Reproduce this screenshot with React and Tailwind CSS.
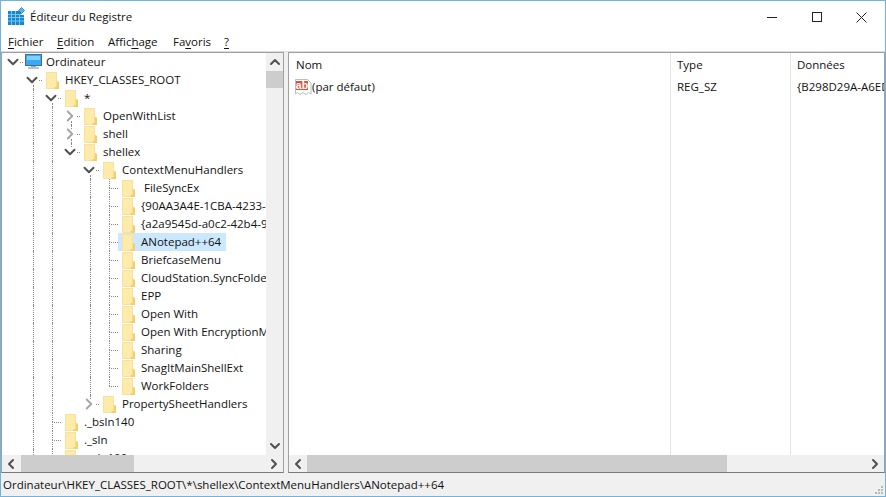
import { ChevronDown, ChevronRight, ChevronUp, ChevronLeft } from 'lucide-react'

const rows = [
  { d: 0, label: 'Ordinateur', icon: 'pc', open: true },
  { d: 1, label: 'HKEY_CLASSES_ROOT', open: true, down: true },
  { d: 2, label: '*', open: true, guides: [1], down: true },
  { d: 3, label: 'OpenWithList', closed: true, guides: [1, 2], down: true },
  { d: 3, label: 'shell', closed: true, guides: [1, 2], up: true, down: true },
  { d: 3, label: 'shellex', open: true, guides: [1, 2], up: true },
  { d: 4, label: 'ContextMenuHandlers', open: true, guides: [1, 2], down: true },
  { d: 5, label: ' FileSyncEx', guides: [1, 2, 4], up: true, down: true },
  { d: 5, label: '{90AA3A4E-1CBA-4233-B8BB-535773D48449}', guides: [1, 2, 4], up: true, down: true },
  { d: 5, label: '{a2a9545d-a0c2-42b4-9708-A0B2BADD77C8}', guides: [1, 2, 4], up: true, down: true },
  { d: 5, label: 'ANotepad++64', guides: [1, 2, 4], up: true, down: true, selected: true },
  { d: 5, label: 'BriefcaseMenu', guides: [1, 2, 4], up: true, down: true },
  { d: 5, label: 'CloudStation.SyncFolder', guides: [1, 2, 4], up: true, down: true },
  { d: 5, label: 'EPP', guides: [1, 2, 4], up: true, down: true },
  { d: 5, label: 'Open With', guides: [1, 2, 4], up: true, down: true },
  { d: 5, label: 'Open With EncryptionMenu', guides: [1, 2, 4], up: true, down: true },
  { d: 5, label: 'Sharing', guides: [1, 2, 4], up: true, down: true },
  { d: 5, label: 'SnagItMainShellExt', guides: [1, 2, 4], up: true, down: true },
  { d: 5, label: 'WorkFolders', guides: [1, 2, 4], up: true },
  { d: 4, label: 'PropertySheetHandlers', closed: true, guides: [1, 2], up: true },
  { d: 2, label: '._bsln140', guides: [1], up: true, down: true },
  { d: 2, label: '._sln', guides: [1], up: true, down: true },
  { d: 2, label: '._sln100', guides: [1], up: true, down: true },
]

function Folder() {
  return (
    <svg width="13" height="17" viewBox="0 0 13 17" className="shrink-0">
      <path d="M0 0H11V9L13 10V17H0Z" fill="#feeba9" />
      <path d="M0.5 0.5H10.5V9M0.5 0.5V16.5H9" fill="none" stroke="#f7e29b" />
      <path d="M10.5 8.5L13 10V17H8.5V15H10.5Z" fill="#f3cf6c" />
    </svg>
  )
}

function Computer() {
  return (
    <svg width="17" height="16" viewBox="0 0 17 16" className="shrink-0">
      <rect x="0.5" y="0.5" width="16" height="11" fill="#39a8f5" stroke="#3b6f96" />
      <rect x="2" y="2" width="13" height="4" fill="#7fd0fb" />
      <rect x="6" y="12" width="5" height="1" fill="#9aa9b5" />
      <rect x="3" y="13" width="11" height="2" fill="#b5c3cf" />
    </svg>
  )
}

function RegIcon() {
  return (
    <svg width="17" height="18" viewBox="0 0 17 18" className="shrink-0">
      <rect x="0" y="4" width="13" height="14" fill="#1487cf" />
      <path d="M0 7.5H13M0 10.5H16M0 14H16M3.5 4V18M7.5 4V18M11.5 8V18" stroke="#7cc4ee" strokeWidth="1" fill="none" />
      <rect x="13" y="8" width="3" height="10" fill="#1487cf" />
      <path d="M13 10.5H16M13 14H16" stroke="#7cc4ee" fill="none" />
      <path d="M13.5 0.5L16.5 3.5L13.5 6.5L10.5 3.5Z" fill="#56b7ea" stroke="#1a6ea8" strokeWidth="0.7" />
    </svg>
  )
}

function AbIcon() {
  return (
    <svg width="17" height="17" viewBox="0 0 17 17" className="shrink-0">
      <path d="M0.5 0.5H12.5L16 4V15L13.5 13.5L11 15.5L8 13.5L5 15.5L2.5 13.5L0.5 15Z" fill="#fff" stroke="#bcbcbc" />
      <rect x="1" y="2" width="12" height="9" fill="#d4573a" />
      <text x="7" y="9.5" textAnchor="middle" fontSize="10.5" fontWeight="700" fill="#fff" fontFamily="Liberation Sans, sans-serif">ab</text>
    </svg>
  )
}

function TreeRow({ row }) {
  const guides = row.guides || []
  const cells = []
  for (let i = 0; i < row.d; i++) {
    cells.push(
      <div key={i} className="w-[19px] h-full shrink-0">
        {guides.includes(i) && <div className="h-full border-l border-dotted border-[#8a8a8a]" />}
      </div>
    )
  }
  const twisty = row.open || row.closed
  return (
    <div className="flex items-center h-[18px] pl-[12px] whitespace-pre">
      {cells}
      <div className="relative w-[9px] h-full shrink-0">
        {row.up && <span className={`absolute left-0 top-0 border-l border-dotted border-[#8a8a8a] ${twisty ? 'h-[4px]' : 'h-[9px]'}`} />}
        {row.down && <span className={`absolute left-0 bottom-0 border-l border-dotted border-[#8a8a8a] ${twisty ? 'h-[4px]' : 'h-[9px]'}`} />}
        <span className={`absolute top-[9px] right-0 border-t border-dotted border-[#8a8a8a] ${twisty ? 'w-[3px]' : 'w-full'}`} />
        {row.open && <ChevronDown size={18} strokeWidth={2.6} className="absolute left-[-10px] top-0 text-[#505050]" />}
        {row.closed && <ChevronRight size={18} strokeWidth={2.6} className="absolute left-[-10px] top-0 text-[#a6a6a6]" />}
      </div>
      <div className={`flex items-center h-full pl-1 pr-[5px] ${row.selected ? 'bg-[#cce8ff]' : ''}`}>
        {row.icon === 'pc' ? <div className="ml-[-2px] mr-[4px]"><Computer /></div> : <div className="mr-[6px]"><Folder /></div>}
        <span>{row.label}</span>
      </div>
    </div>
  )
}

function Scrollbar({ thumbLeft, thumbWidth }) {
  return (
    <div className="flex items-center h-[17px] bg-[#f0f0f0] shrink-0 text-[#505050]">
      <div className="w-[18px] flex justify-center shrink-0">
        <ChevronLeft size={16} strokeWidth={3} />
      </div>
      <div className="flex-1 h-full">
        <div className={`h-full bg-[#cdcdcd] ${thumbLeft} ${thumbWidth}`} />
      </div>
      <div className="w-[18px] flex justify-center shrink-0">
        <ChevronRight size={16} strokeWidth={3} />
      </div>
    </div>
  )
}

function Menu({ before, mnemonic, after, className }) {
  return (
    <span className={className}>
      {before}<span className="underline underline-offset-2">{mnemonic}</span>{after}
    </span>
  )
}

export default function App() {
  return (
    <div className="w-[886px] h-[497px] flex flex-col bg-white border border-[#6fb4dd] overflow-hidden text-[11.5px] leading-[18px] text-[#111]" style={{ fontFamily: '"Open Sans", "Noto Sans", sans-serif' }}>
      {/* title bar */}
      <div className="flex items-center h-[32px] shrink-0">
        <div className="ml-[7px] mr-[5px] mb-[2px]"><RegIcon /></div>
        <span>Éditeur du Registre</span>
        <div className="ml-auto flex items-center h-full">
          <div className="w-[45px] h-full flex items-center justify-center">
            <div className="w-[10px] h-px bg-[#222]" />
          </div>
          <div className="w-[45px] h-full flex items-center justify-center">
            <div className="w-[10px] h-[10px] border border-[#222]" />
          </div>
          <div className="w-[45px] h-full flex items-center justify-center mr-[1px]">
            <svg width="11" height="11" viewBox="0 0 11 11"><path d="M0.5 0.5L10.5 10.5M10.5 0.5L0.5 10.5" stroke="#222" fill="none" /></svg>
          </div>
        </div>
      </div>

      {/* menu */}
      <div className="flex items-center h-[18px] pl-[7px] shrink-0">
        <Menu mnemonic="F" after="ichier" className="w-[49px]" />
        <Menu mnemonic="E" after="dition" className="w-[51px]" />
        <Menu before="Affic" mnemonic="h" after="age" className="w-[65px]" />
        <Menu before="Fa" mnemonic="v" after="oris" className="w-[51px]" />
        <Menu mnemonic="?" />
      </div>

      {/* panes */}
      <div className="flex flex-1 min-h-0 bg-[#f0f0f0] border-t border-[#dcdcdc]">
        <div className="w-[283px] flex flex-col border border-[#a0a0a0] border-b-[#7a7a7a] bg-white">
          <div className="flex flex-1 min-h-0">
            <div className="flex-1 min-w-0 overflow-hidden">
              {rows.map((row, i) => <TreeRow key={i} row={row} />)}
            </div>
            <div className="w-[17px] flex flex-col items-center bg-[#f0f0f0] shrink-0 text-[#505050]">
              <div className="h-[18px] flex items-center"><ChevronUp size={16} strokeWidth={3} /></div>
              <div className="flex-1 w-full">
                <div className="h-[17px] bg-[#cdcdcd]" />
              </div>
              <div className="h-[18px] flex items-center"><ChevronDown size={16} strokeWidth={3} /></div>
            </div>
          </div>
          <Scrollbar thumbLeft="ml-px" thumbWidth="w-[113px]" />
        </div>

        <div className="w-[4px] shrink-0" />

        <div className="flex-1 min-w-0 flex flex-col border border-[#a0a0a0] border-b-[#7a7a7a] bg-white">
          <div className="flex flex-1 min-h-0 whitespace-nowrap">
            <div className="w-[381px] pl-[7px] shrink-0">
              <div className="h-[25px] pb-[2px] flex items-center">Nom</div>
              <div className="flex items-center h-[18px]">
                <div className="ml-[-1px]"><AbIcon /></div>
                <span>(par défaut)</span>
              </div>
            </div>
            <div className="w-[120px] pl-[6px] border-l border-[#e5e5e5] shrink-0">
              <div className="h-[25px] pb-[2px] flex items-center">Type</div>
              <div className="flex items-center h-[18px]">REG_SZ</div>
            </div>
            <div className="flex-1 min-w-0 overflow-hidden pl-[6px] border-l border-[#e5e5e5]">
              <div className="h-[25px] pb-[2px] flex items-center">Données</div>
              <div className="flex items-center h-[18px]">{'{B298D29A-A6ED-11DE-BA8B-A4C756D89593}'}</div>
            </div>
          </div>
          <Scrollbar thumbLeft="" thumbWidth="w-[420px]" />
        </div>
      </div>

      {/* status bar */}
      <div className="relative flex items-center h-[23px] shrink-0 bg-[#f0f0f0] pl-[2px] border-t border-[#f0f0f0]">
        <span>Ordinateur\HKEY_CLASSES_ROOT\*\shellex\ContextMenuHandlers\ANotepad++64</span>
        <svg width="9" height="9" viewBox="0 0 9 9" className="absolute right-[1px] bottom-[1px]">
          <path d="M6 0h2v2H6ZM3 3h2v2H3ZM6 3h2v2H6ZM0 6h2v2H0ZM3 6h2v2H3ZM6 6h2v2H6Z" fill="#b8b8b8" />
        </svg>
      </div>
    </div>
  )
}
